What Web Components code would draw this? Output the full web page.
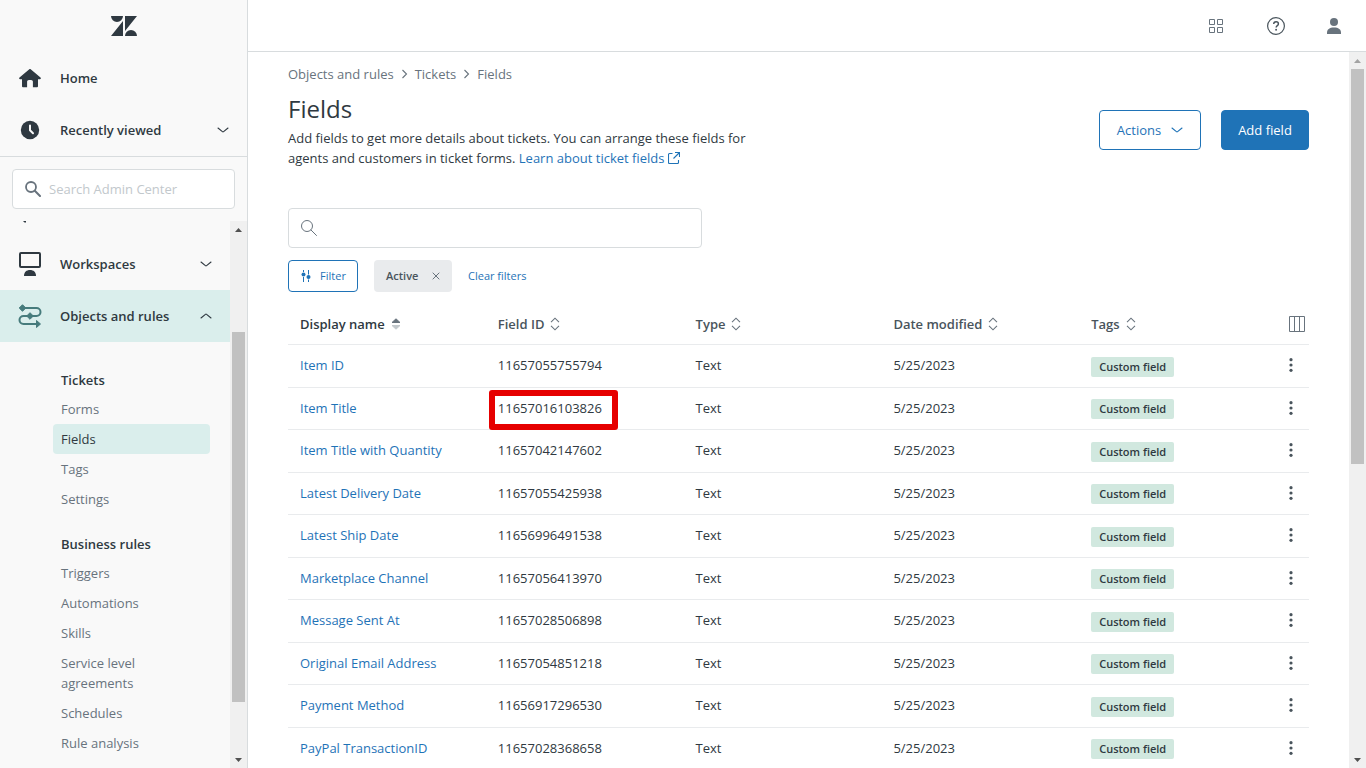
<!DOCTYPE html>
<html lang="en">
<head>
<meta charset="utf-8">
<title>Fields - Admin Center</title>
<style>
  html, body { height: 100%; margin: 0; }
  body { font: 13px/20px "Open Sans", "Noto Sans", sans-serif; color: #2f3941; background: #fff; overflow: hidden; }
</style>
</head>
<body>
<admin-app></admin-app>
<script>
const base = `<style>
  *, *::before, *::after { box-sizing: border-box; }
  button, input { font: inherit; color: inherit; margin: 0; }
  button { background: none; border: 0; padding: 0; text-align: left; }
  a { color: #1f73b7; text-decoration: none; }
  svg { display: block; flex: none; }
</style>`;

function define(name, template, setup) {
  customElements.define(name, class extends HTMLElement {
    connectedCallback() {
      if (this.shadowRoot) return;
      const root = this.attachShadow({ mode: 'open' });
      root.innerHTML = base + (typeof template === 'function' ? template(this) : template);
      if (setup) setup(this, root);
    }
  });
}

const ICONS = {
  logo: [26, 20, '<path fill="currentColor" d="M0 0h12a6 6 0 0 1-12 0zM12 5v15H0zM14 0h12L14 15zM14 20a6 6 0 0 1 12 0z"/>'],
  home: [24, 24, '<path fill="currentColor" d="M12.7 3.3l9.8 8.2c.7.7.3 1.8-.6 1.8H20v7c0 .6-.4.9-.9.9h-4.2v-5.4c0-1-.8-1.8-1.8-1.8h-2.2c-1 0-1.8.8-1.8 1.8v5.4H4.9c-.5 0-.9-.3-.9-.9v-7H2.100c-.9 0-1.300-1.100-.6-1.800l9.800-8.200c.4-.4 1-.4 1.400 0z"/>'],
  clock: [24, 24, '<circle cx="12" cy="12" r="9.200" fill="currentColor"/><path d="M12 7.500v4.800l3 3" fill="none" stroke="#f9f9f9" stroke-width="2" stroke-linecap="round" stroke-linejoin="round"/>'],
  monitor: [24, 24, '<rect x="2" y="1" width="20" height="14" rx="1" fill="none" stroke="currentColor" stroke-width="2"/><path fill="currentColor" d="M6 24c0-4 2.500-6 6-6s6 2 6 6z"/>'],
  rules: [24, 24, '<path d="M5 4h13.500a4 4 0 0 1 0 8H5.500a4 4 0 0 0 0 8H18" fill="none" stroke="currentColor" stroke-width="2"/><path fill="currentColor" stroke="currentColor" stroke-linejoin="round" d="M4.500.7L7.800 4 4.500 7.300 1.200 4zM12 8.700l3.300 3.300L12 15.300 8.700 12zM18.500 16.500l4 3.500-4 3.500z"/>'],
  down: [12, 12, '<path d="M1 4l4.400 3.700q.6.500 1.200 0L11 4" fill="none" stroke="currentColor" stroke-width="1.100" stroke-linecap="round"/>'],
  up: [12, 12, '<path d="M1 8l4.400-3.700q.6-.5 1.200 0L11 8" fill="none" stroke="currentColor" stroke-width="1.100" stroke-linecap="round"/>'],
  searchBold: [16, 16, '<circle cx="6" cy="6" r="5" fill="none" stroke="currentColor" stroke-width="1.800"/><path d="M9.800 9.800l5.200 5.200" stroke="currentColor" stroke-width="2" stroke-linecap="round"/>'],
  search: [16, 16, '<circle cx="6" cy="6" r="5.500" fill="none" stroke="currentColor"/><path d="M10 10l5.500 5.500" stroke="currentColor" stroke-linecap="round"/>'],
  apps: [16, 16, '<path d="M.5 1.500h5v5h-5zM8.500 1.500h5v5h-5zM.5 9.500h5v5h-5zM8.500 9.500h5v5h-5z" fill="none" stroke="currentColor"/>'],
  help: [18, 18, '<circle cx="9" cy="9" r="8.400" fill="none" stroke="currentColor" stroke-width="1.200"/><path d="M6.700 7.100c0-1.400 1-2.300 2.400-2.300s2.300.9 2.300 2.100c0 1.700-2.300 1.800-2.300 3.700" fill="none" stroke="currentColor" stroke-width="1.400"/><circle cx="9.100" cy="12.700" r=".95" fill="currentColor"/>'],
  user: [14, 16, '<circle cx="7" cy="4" r="4" fill="currentColor"/><path fill="currentColor" d="M0 16v-1.500C0 11.500 2.500 9.500 7 9.500s7 2 7 5V16z"/>'],
  crumb: [7, 10, '<path d="M1.500 1l4 4-4 4" fill="none" stroke="currentColor" stroke-width="1.100"/>'],
  external: [12, 12, '<path d="M4.500 1.500h-3a1 1 0 0 0-1 1v8a1 1 0 0 0 1 1h8a1 1 0 0 0 1-1V8M7 .5h4.500V5M11 1L5.500 6.500" fill="none" stroke="currentColor" stroke-width="1.100"/>'],
  filter: [12, 12, '<path d="M3.500 0v2M3.500 7v5M8.500 0v4.500M8.500 9.500V12" stroke="currentColor"/><circle cx="3.500" cy="4.500" r="2" fill="currentColor"/><circle cx="8.500" cy="7" r="2" fill="currentColor"/>'],
  close: [8, 8, '<path d="M.7.700l6.600 6.600M7.300.7L.7 7.300" stroke="currentColor"/>'],
  sorted: [10, 12, '<path fill="#68737d" stroke="#68737d" stroke-linejoin="round" d="M5 .8L9 4.500H1z"/><path fill="#c2c8cc" stroke="#c2c8cc" stroke-linejoin="round" d="M5 11.200L1 7.500h8z"/>'],
  sort: [10, 14, '<path d="M1 5.200l4-4 4 4M1 8.800l4 4 4-4" fill="none" stroke="#68737d" stroke-width="1.100"/>'],
  columns: [16, 16, '<path d="M.5.5h15v15H.5zM5.500.5v15M10.500.5v15" fill="none" stroke="currentColor"/>'],
  kebab: [4, 14, '<g fill="currentColor"><circle cx="2" cy="1.700" r="1.600"/><circle cx="2" cy="7" r="1.600"/><circle cx="2" cy="12.300" r="1.600"/></g>'],
  tip: [3, 2, '<path fill="currentColor" d="M0 0h3v1.500H1.500z"/>'],
  arrowUp: [7, 4, '<path fill="currentColor" d="M3.500 0L7 4H0z"/>'],
  arrowDown: [7, 4, '<path fill="currentColor" d="M3.500 4L0 0h7z"/>']
};

define('ui-icon', el => {
  const [w, h, body] = ICONS[el.getAttribute('name')];
  return `<style>:host { display: inline-flex; flex: none; }</style>
  <svg width="${w}" height="${h}" viewBox="0 0 ${w} ${h}" aria-hidden="true">${body}</svg>`;
});

define('scroll-track', el => `<style>
  :host { display: grid; grid-template-rows: 17px 1fr 17px; width: 17px; flex: none; background: #f0f0f0; color: #505050; }
  .end { display: grid; place-items: center; }
  .faint { color: #a3a3a3; }
  .track { display: flex; flex-direction: column; padding: 0 2px; }
  .before { flex: ${el.getAttribute('before')} 0 0; }
  .thumb { flex: ${el.getAttribute('thumb')} 0 0; background: #c1c1c1; }
  .after { flex: ${el.getAttribute('after')} 0 0; }
</style>
<div class="end ${el.getAttribute('before') === '0' ? 'faint' : ''}"><ui-icon name="arrowUp"></ui-icon></div>
<div class="track"><div class="before"></div><div class="thumb"></div><div class="after"></div></div>
<div class="end"><ui-icon name="arrowDown"></ui-icon></div>`);

define('nav-row', el => `<style>
  :host { display: block; }
  button { display: flex; align-items: center; width: 100%; height: 52px; padding: 0 18px; gap: 18px; font-weight: 600; }
  :host([active]) button { background: #daeeec; }
  .icon { display: flex; }
  :host([active]) .icon { color: #467b7c; }
  .label { flex: 1; }
</style>
<button type="button"><span class="icon"><ui-icon name="${el.getAttribute('icon')}"></ui-icon></span>
<span class="label"><slot></slot></span>${el.hasAttribute('chevron') ? `<ui-icon name="${el.getAttribute('chevron')}"></ui-icon>` : ''}</button>`);

define('nav-group', el => `<style>
  :host { display: block; margin: 0 20px 20px 53px; }
  h2 { font-size: 13px; line-height: 20px; font-weight: 600; margin: 0 8px 4px; }
  ul { list-style: none; margin: 0; padding: 0; }
  a { display: block; padding: 5px 8px; border-radius: 4px; color: #68737d; }
  a[aria-current] { background: #daeeec; color: #2f3941; }
  span { display: block; max-width: 100px; }
</style>
<h2>${el.getAttribute('heading')}</h2>
<ul>${el.getAttribute('items').split('|').map(t =>
  `<li><a href="#"${t === el.getAttribute('current') ? ' aria-current="page"' : ''}><span>${t}</span></a></li>`).join('')}</ul>`);

define('side-bar', `<style>
  :host { display: flex; flex-direction: column; background: #f9f9f9; border-right: 1px solid #d8dcde; min-height: 0; }
  .logo { height: 52px; flex: none; display: grid; place-items: center; }
  .top { border-bottom: 1px solid #d8dcde; flex: none; }
  .search { display: flex; align-items: center; gap: 8px; margin: 12px; height: 40px; flex: none; padding: 0 12px; border: 1px solid #d8dcde; border-radius: 4px; background: #fff; color: #68737d; }
  input { flex: 1; min-width: 0; border: 0; outline: 0; background: none; padding: 0; }
  input::placeholder { color: #c2c8cc; opacity: 1; }
  .scroll { display: flex; flex: 1; min-height: 0; }
  nav { flex: 1; overflow: hidden; }
  .peek { height: 17px; padding-left: 23px; display: flex; align-items: flex-start; }
  .groups { padding-top: 28px; }
</style>
<div class="logo"><ui-icon name="logo"></ui-icon></div>
<div class="top">
  <nav-row icon="home">Home</nav-row>
  <nav-row icon="clock" chevron="down">Recently viewed</nav-row>
</div>
<label class="search"><ui-icon name="searchBold"></ui-icon><input type="text" placeholder="Search Admin Center" aria-label="Search Admin Center"></label>
<div class="scroll">
  <nav>
    <div class="peek"><ui-icon name="tip"></ui-icon></div>
    <nav-row icon="monitor" chevron="down">Workspaces</nav-row>
    <nav-row icon="rules" chevron="up" active>Objects and rules</nav-row>
    <div class="groups">
      <nav-group heading="Tickets" items="Forms|Fields|Tags|Settings" current="Fields"></nav-group>
      <nav-group heading="Business rules" items="Triggers|Automations|Skills|Service level agreements|Schedules|Rule analysis"></nav-group>
    </div>
  </nav>
  <scroll-track before="94" thumb="370" after="49"></scroll-track>
</div>`);

define('top-bar', `<style>
  :host { display: flex; justify-content: flex-end; align-items: center; gap: 42px; height: 52px; flex: none; padding-right: 25px; border-bottom: 1px solid #d8dcde; color: #68737d; box-sizing: border-box; }
  button { display: flex; }
  .help { color: #49545c; }
</style>
<button type="button" aria-label="Products"><ui-icon name="apps"></ui-icon></button>
<button type="button" class="help" aria-label="Help"><ui-icon name="help"></ui-icon></button>
<button type="button" aria-label="Profile"><ui-icon name="user"></ui-icon></button>`);

define('ui-button', `<style>
  :host { display: block; flex: none; }
  button { display: flex; align-items: center; justify-content: center; gap: 10px; height: 40px; width: 100%; padding: 0 15px; border: 1px solid #1f73b7; border-radius: 4px; color: #1f73b7; background: #fff; white-space: nowrap; }
  :host([primary]) button { background: #1f73b7; color: #fff; }
  :host([small]) button { height: 32px; padding: 0 11px; gap: 8px; font-size: 11px; }
</style>
<button type="button"><slot></slot></button>`);

define('page-heading', `<style>
  :host { display: block; }
  .crumbs { display: flex; align-items: center; gap: 7px; color: #68737d; margin-bottom: 8px; }
  .crumbs a { color: inherit; }
  .row { display: flex; align-items: center; justify-content: space-between; }
  h1 { font-size: 24px; line-height: 34px; font-weight: 400; margin: 0 0 2px; }
  p { margin: 0; max-width: 480px; }
  p a { white-space: nowrap; }
  p ui-icon { vertical-align: -1px; margin-left: 4px; }
  .actions { display: flex; gap: 20px; }
  .menu { width: 102px; }
  .add { width: 88px; }
</style>
<nav class="crumbs" aria-label="Breadcrumb"><a href="#">Objects and rules</a><ui-icon name="crumb"></ui-icon><a href="#">Tickets</a><ui-icon name="crumb"></ui-icon><span>Fields</span></nav>
<div class="row">
  <div>
    <h1>Fields</h1>
    <p>Add fields to get more details about tickets. You can arrange these fields for agents and customers in ticket forms. <a href="#">Learn about ticket fields<ui-icon name="external"></ui-icon></a></p>
  </div>
  <div class="actions">
    <ui-button class="menu">Actions <ui-icon name="down"></ui-icon></ui-button>
    <ui-button class="add" primary>Add field</ui-button>
  </div>
</div>`);

define('filter-bar', `<style>
  :host { display: block; }
  .search { display: flex; align-items: center; gap: 8px; height: 40px; max-width: 414px; padding: 0 12px; border: 1px solid #d8dcde; border-radius: 4px; color: #68737d; }
  input { flex: 1; min-width: 0; border: 0; outline: 0; padding: 0; }
  .row { display: flex; align-items: center; gap: 16px; margin-top: 12px; font-size: 11px; }
  .filter { width: 70px; }
  .chip { display: flex; align-items: center; justify-content: space-between; width: 78px; height: 32px; padding: 0 12px; border-radius: 4px; background: #e9ebed; color: #49545c; font-weight: 600; }
  .chip button { display: flex; color: #68737d; }
</style>
<label class="search"><ui-icon name="search"></ui-icon><input type="text" aria-label="Search fields"></label>
<div class="row">
  <ui-button class="filter" small><ui-icon name="filter"></ui-icon>Filter</ui-button>
  <span class="chip">Active <button type="button" aria-label="Remove filter"><ui-icon name="close"></ui-icon></button></span>
  <a href="#">Clear filters</a>
</div>`);

define('field-tag', `<style>
  :host { display: inline-block; height: 20px; padding: 0 8px; border-radius: 2px; background: #d1e8df; font-size: 11px; line-height: 20px; font-weight: 600; vertical-align: top; white-space: nowrap; }
</style><slot></slot>`);

const FIELDS = [
  ['Item ID', '11657055755794'],
  ['Item Title', '11657016103826'],
  ['Item Title with Quantity', '11657042147602'],
  ['Latest Delivery Date', '11657055425938'],
  ['Latest Ship Date', '11656996491538'],
  ['Marketplace Channel', '11657056413970'],
  ['Message Sent At', '11657028506898'],
  ['Original Email Address', '11657054851218'],
  ['Payment Method', '11656917296530'],
  ['PayPal TransactionID', '11657028368658']
];
const MARKED = '11657016103826';

define('field-table', () => `<style>
  :host { display: block; }
  table { width: 100%; table-layout: fixed; border-collapse: separate; border-spacing: 0; }
  .tools { width: 32px; }
  th, td { padding: 10px 12px 0; text-align: left; vertical-align: top; border-bottom: 1px solid #e9ebed; white-space: nowrap; }
  th { height: 41px; font-weight: 600; color: #49545c; }
  th[aria-sort] { color: #2f3941; }
  th button { display: flex; align-items: center; gap: 6px; height: 20px; }
  tbody tr { height: 43px; }
  tbody tr:nth-child(even) { height: 42px; }
  td { position: relative; }
  .tag { padding-top: 12px; }
  tr:nth-child(even) .tag { padding-top: 11px; }
  td button { display: flex; align-items: center; height: 20px; color: #49545c; }
  th:last-child { color: #68737d; }
  .mark { position: absolute; z-index: 1; left: 3px; top: 2px; width: 129px; height: 40px; border: 6px solid #e60000; border-radius: 3px; pointer-events: none; }
</style>
<table>
  <colgroup><col><col><col><col><col><col class="tools"></colgroup>
  <thead><tr>
    <th aria-sort="ascending"><button type="button">Display name<ui-icon name="sorted"></ui-icon></button></th>
    ${['Field ID', 'Type', 'Date modified', 'Tags'].map(t => `<th><button type="button">${t}<ui-icon name="sort"></ui-icon></button></th>`).join('')}
    <th><button type="button" aria-label="Choose columns"><ui-icon name="columns"></ui-icon></button></th>
  </tr></thead>
  <tbody>${FIELDS.map(([name, id]) => `<tr>
    <td><a href="#">${name}</a></td>
    <td>${id}${id === MARKED ? '<span class="mark"></span>' : ''}</td>
    <td>Text</td>
    <td>5/25/2023</td>
    <td class="tag"><field-tag>Custom field</field-tag></td>
    <td><button type="button" aria-label="Options for ${name}"><ui-icon name="kebab"></ui-icon></button></td>
  </tr>`).join('')}</tbody>
</table>`);

define('admin-app', `<style>
  :host { display: grid; grid-template-columns: 248px minmax(0, 1fr); grid-template-rows: minmax(0, 1fr); height: 100vh; }
  .page { display: flex; flex-direction: column; min-height: 0; }
  .body { display: flex; flex: 1; min-height: 0; }
  main { flex: 1; min-width: 0; overflow: hidden; padding: 12px 40px 0; }
  filter-bar { margin: 40px 0 12px; }
</style>
<side-bar></side-bar>
<div class="page">
  <top-bar></top-bar>
  <div class="body">
    <main>
      <page-heading></page-heading>
      <filter-bar></filter-bar>
      <field-table></field-table>
    </main>
    <scroll-track before="0" thumb="395" after="287"></scroll-track>
  </div>
</div>`);
</script>
</body>
</html>
